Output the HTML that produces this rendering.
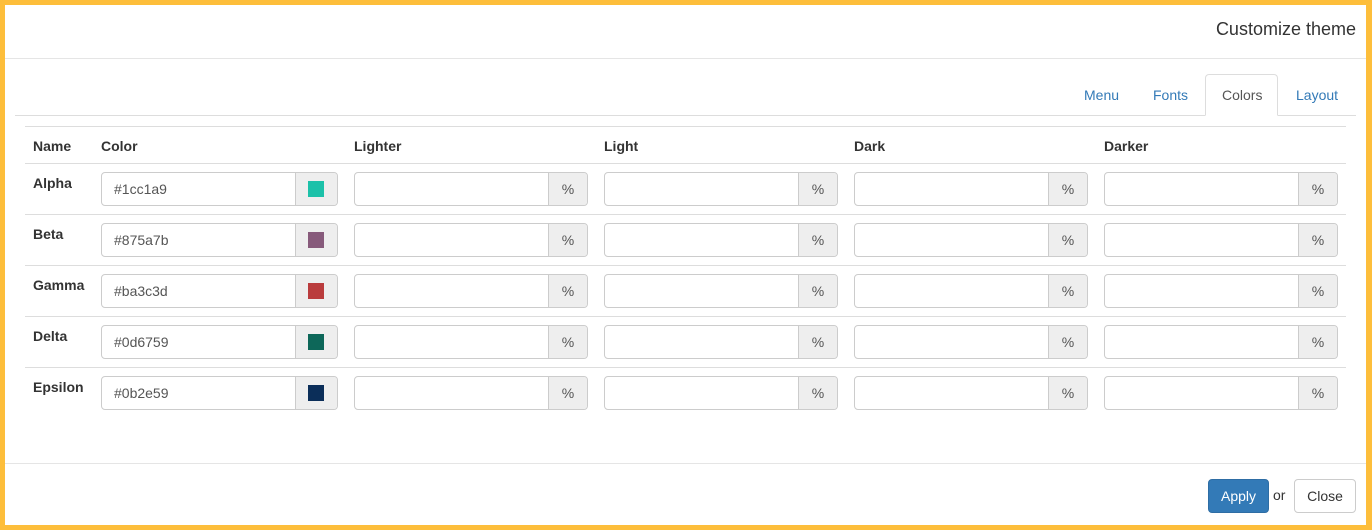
<!DOCTYPE html>
<html><head><style>
*{box-sizing:border-box;margin:0;padding:0}
body{width:1372px;height:530px;background:#fdbe3b;font-family:"Liberation Sans",Arial,sans-serif;font-size:14px;color:#333;position:relative;overflow:hidden}
.box{position:absolute;left:5px;top:5px;width:1361px;height:520px;background:#fff}
.a{position:absolute}
.hl{position:absolute;height:1px;background:#e5e5e5}
.tab{position:absolute;top:87px;color:#337ab7;font-size:14px}
.th{position:absolute;top:138px;font-weight:bold}
.rn{position:absolute;font-weight:bold}
.inp{position:absolute;height:34px;border:1px solid #ccc;border-radius:4px;background:#fff;overflow:hidden}
.inp .ad{position:absolute;right:0;top:0;bottom:0;border-left:1px solid #ccc;background:#eee;text-align:center;line-height:32px;color:#555;font-size:14px}
.inp .v{position:absolute;left:12px;top:8px;color:#555}
.sw{position:absolute;left:12px;top:8px;width:16px;height:16px}
</style></head><body>
<div class="box"></div>
<div class="a" style="right:16px;top:19px;font-size:18px;color:#333">Customize theme</div>
<div class="hl" style="left:5px;width:1361px;top:58px"></div>
<div class="hl" style="left:15px;width:1341px;top:115px;background:#ddd"></div>
<div class="a" style="left:1205px;top:74px;width:73px;height:42px;border:1px solid #ddd;border-bottom:1px solid #fff;border-radius:4px 4px 0 0;background:#fff"></div>
<div class="tab" style="left:1084px">Menu</div>
<div class="tab" style="left:1153px">Fonts</div>
<div class="tab" style="left:1222px;color:#555">Colors</div>
<div class="tab" style="left:1296px">Layout</div>
<div class="hl" style="left:25px;width:1321px;top:126px;background:#ddd"></div>
<div class="th" style="left:33px">Name</div>
<div class="th" style="left:101px">Color</div>
<div class="th" style="left:354px">Lighter</div>
<div class="th" style="left:604px">Light</div>
<div class="th" style="left:854px">Dark</div>
<div class="th" style="left:1104px">Darker</div>
<div class="hl" style="left:25px;width:1321px;top:163px;background:#ddd"></div>
<div id="rows"></div>
<script>
var r=[["Alpha","#1cc1a9"],["Beta","#875a7b"],["Gamma","#ba3c3d"],["Delta","#0d6759"],["Epsilon","#0b2e59"]],h="";
r.forEach(function(x,i){var y=172+51*i;
h+='<div class="rn" style="left:33px;top:'+(y+3)+'px">'+x[0]+'</div>';
h+='<div class="inp" style="left:101px;top:'+y+'px;width:237px"><span class="v">'+x[1]+'</span><div class="ad" style="width:42px"><div class="sw" style="background:'+x[1]+'"></div></div></div>';
[354,604,854,1104].forEach(function(l){h+='<div class="inp" style="left:'+l+'px;top:'+y+'px;width:234px"><div class="ad" style="width:39px">%</div></div>';});
if(i<4)h+='<div class="hl" style="left:25px;width:1321px;top:'+(y+42)+'px;background:#ddd"></div>';});
document.getElementById("rows").innerHTML=h;
</script>
<div class="hl" style="left:5px;width:1361px;top:463px"></div>
<div class="a" style="left:1208px;top:479px;width:61px;height:34px;background:#337ab7;border:1px solid #2e6da4;border-radius:4px;color:#fff;text-align:center;line-height:32px">Apply</div>
<div class="a" style="left:1273px;top:487px;color:#333">or</div>
<div class="a" style="left:1294px;top:479px;width:62px;height:34px;background:#fff;border:1px solid #ccc;border-radius:4px;color:#333;text-align:center;line-height:32px">Close</div>
</body></html>
